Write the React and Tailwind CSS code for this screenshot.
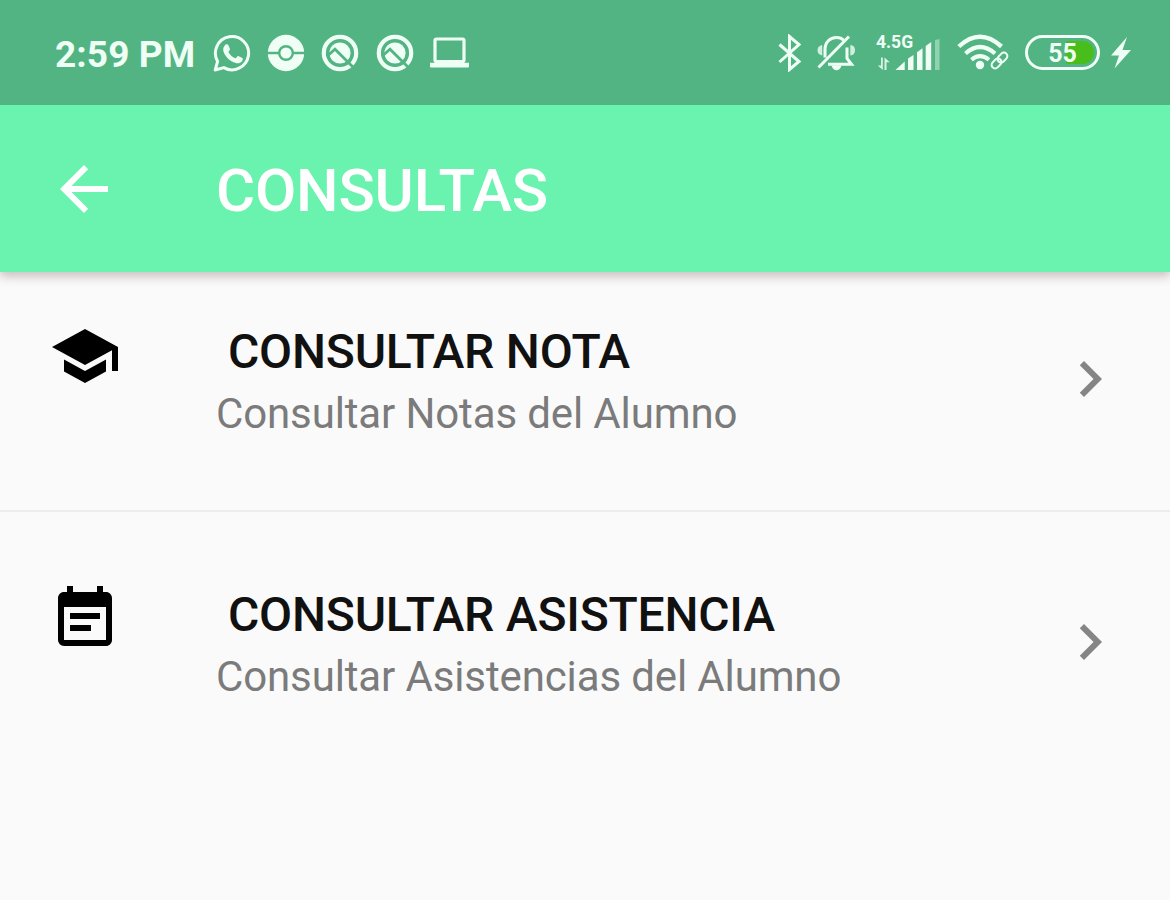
import React from 'react'
import { MdArrowBack, MdChevronRight, MdEventNote, MdSchool } from 'react-icons/md'

const items = [
    {
        id: 'nota',
        icon: MdSchool,
        title: 'CONSULTAR NOTA',
        subtitle: 'Consultar Notas del Alumno',
    },
    {
        id: 'asistencia',
        icon: MdEventNote,
        title: 'CONSULTAR ASISTENCIA',
        subtitle: 'Consultar Asistencias del Alumno',
    },
]

const WhatsappIcon = () => (
    <svg width='38' height='38' viewBox='0 0 38 38' fill='none' className='shrink-0'>
        <path d='M2.2 36 L4.6 27.4 A16.6 16.6 0 1 1 10.8 33.6 Z' stroke='currentColor' strokeWidth='3' strokeLinejoin='round' />
        <path
            d='M12.6 10.6c.6-.6 2-.7 2.5.2l1.9 4.1c.3.8-1.7 2.6-1.6 3.1 1.5 3 3.8 5 7 6.3.8.2 2-2.5 2.9-2.2l4 2c1 .6.4 2.5-.4 3.4-1.5 1.6-3.8 2.1-6 1.5-6-1.6-11-6.5-12.5-11.7-.6-2.5.3-5 2.2-6.7z'
            fill='currentColor'
        />
    </svg>
)

const BallIcon = () => (
    <svg width='38' height='38' viewBox='0 0 38 38' fill='none' className='shrink-0'>
        <circle cx='19' cy='19' r='18.2' fill='currentColor' />
        <path d='M0 19h12M26 19h12' stroke='#53b483' strokeWidth='2.4' />
        <circle cx='19' cy='19' r='6.8' stroke='#53b483' strokeWidth='2.4' />
    </svg>
)

const AndroidQIcon = () => (
    <svg width='38' height='38' viewBox='0 0 38 38' fill='none' className='shrink-0'>
        <circle cx='19' cy='19' r='16.2' stroke='currentColor' strokeWidth='4.2' />
        <circle cx='19' cy='19' r='10.6' fill='currentColor' />
        <path d='M6 22.2L14 15.2L32 33' stroke='#53b483' strokeWidth='2.8' />
    </svg>
)

const LaptopIcon = () => (
    <svg width='40' height='38' viewBox='0 0 40 38' fill='none' className='shrink-0'>
        <rect x='5' y='5' width='29' height='22.5' rx='1.5' stroke='currentColor' strokeWidth='3.2' />
        <path d='M0 28.7h39v3.5q0 1.3-1.3 1.3H1.3Q0 33.5 0 32.2z' fill='currentColor' />
    </svg>
)

const BluetoothIcon = () => (
    <svg width='26' height='38' viewBox='0 0 26 38' fill='none' className='shrink-0'>
        <path d='M2.5 10.5L22 27.5L12.5 35.5V2.5L22 10.5L2.5 28' stroke='currentColor' strokeWidth='3' />
    </svg>
)

const BellOffIcon = () => (
    <svg width='40' height='38' viewBox='0 0 40 38' fill='none' className='shrink-0'>
        <path d='M8 23.5V15.5C8 8 13 3.5 19.5 3.5c3 0 5.5 1 7.2 2.7' stroke='currentColor' strokeWidth='3' />
        <path d='M30 13.5V24.5L34.5 30.2H11' stroke='currentColor' strokeWidth='3' />
        <path d='M1.5 33.5L32 2.5' stroke='currentColor' strokeWidth='3' />
        <path d='M14.5 31.5h10q-1.5 4.7-5 4.7t-5-4.7z' fill='currentColor' />
        <path d='M5.2 11v10.5Q.5 20.5.5 16.2T5.2 11zM33.3 11v10.5q4.7-.5 4.7-5.3t-4.7-5.2z' fill='currentColor' opacity='.8' />
    </svg>
)

const SignalBars = () => (
    <svg width='65' height='32' viewBox='0 -10 65 32' fill='currentColor' className='block'>
        <path d='M5 8.5V16.5H1.8L6.8 21V8.5zM8.5 21V8.5L13.8 13.2H10.5v7.8z' opacity='.85' />
        <path d='M19.5 21l9.2-8.5V21z' />
        <path d='M32 9.5l5.5-3.5V21H32z' />
        <path d='M41 3.2l5.5-4V21H41z' />
        <path d='M49.7 -3l5.5-4V21h-5.5z' />
        <path d='M59 -9l4.5-1V21H59z' opacity='.4' />
    </svg>
)

const WifiIcon = () => (
    <svg width='52' height='38' viewBox='0 0 52 38' fill='none' className='shrink-0'>
        <path d='M1.8 12.5Q23 -7 44.5 12.5' stroke='currentColor' strokeWidth='4.4' />
        <path d='M8.5 19.5Q23 6.5 38 19.5' stroke='currentColor' strokeWidth='4.2' />
        <path d='M14.5 25.8Q23 18.5 32 25.8' stroke='currentColor' strokeWidth='4' />
        <circle cx='23' cy='31' r='4.2' fill='currentColor' />
        <g transform='rotate(-45 42.5 26.5)' stroke='currentColor' strokeWidth='2'>
            <rect x='32.8' y='23' width='11' height='7' rx='3.5' />
            <rect x='41.2' y='23' width='11' height='7' rx='3.5' />
        </g>
    </svg>
)

const BoltIcon = () => (
    <svg width='22' height='32' viewBox='0 0 22 32' fill='currentColor' className='shrink-0'>
        <path d='M17 0L1 18.5h8L4.5 31.5L21 13h-8.5z' />
    </svg>
)

const StatusBar = () => (
    <div className='relative z-10 flex h-[105px] items-center justify-between bg-[#53b483] pl-[54px] pr-[38px] text-[#effff5]'>
        <div className='flex items-center'>
            <span className='w-[158.5px] whitespace-nowrap pl-px pt-[3px] text-[37px] font-bold leading-none tracking-[0.1px]'>2:59 PM</span>
            <div className='flex items-center gap-[16.4px]'>
                <WhatsappIcon />
                <BallIcon />
                <AndroidQIcon />
                <AndroidQIcon />
                <LaptopIcon />
            </div>
        </div>
        <div className='flex items-center'>
            <BluetoothIcon />
            <div className='ml-[14px]'>
                <BellOffIcon />
            </div>
            <div className='ml-[19px] flex h-[36px] w-[65px] flex-col'>
                <span className='h-[4px] text-[17.5px] font-bold leading-[14px]'>4.5G</span>
                <SignalBars />
            </div>
            <div className='ml-[16px]'>
                <WifiIcon />
            </div>
            <div className='ml-[16px] flex h-[35px] w-[75px] items-center justify-center rounded-full border-[3.5px] border-[#effff5] p-[3px]'>
                <div className='flex h-full w-full items-center justify-center rounded-full bg-linear-to-r from-transparent from-55% to-[#48bd1c] to-55% pt-0.5 text-[25px] font-bold leading-none'>
                    55
                </div>
            </div>
            <div className='ml-[10px]'>
                <BoltIcon />
            </div>
        </div>
    </div>
)

const AppBar = () => (
    <header className='relative flex h-[167px] items-center bg-[#6af2af] pl-12 text-white shadow-[0_4px_10px_rgba(60,30,20,0.28)]'>
        <button aria-label='Volver'>
            <MdArrowBack className='size-[72px]' />
        </button>
        <h1 className='ml-24 pt-1 text-[60px] font-medium leading-none tracking-[-0.2px]'>CONSULTAS</h1>
    </header>
)

const MenuItem = ({ item }) => {
    const Icon = item.icon
    return (
        <li className='flex h-[124px] px-12'>
            <Icon className='ml-px size-[72px] shrink-0 text-black' />
            <div className='ml-[95px] flex-1 whitespace-nowrap pt-px'>
                <p className='pl-3 text-[48px] font-medium leading-[62px] tracking-[-0.22px] text-[#111111]'>{item.title}</p>
                <p className='text-[42px] leading-[62px] tracking-[-0.13px] text-[#7b7b7b]'>{item.subtitle}</p>
            </div>
            <MdChevronRight className='-mr-1 mt-[23px] size-[72px] shrink-0 text-[#858585]' />
        </li>
    )
}

const App = () => {
    return (
        <div className="flex h-[900px] w-full flex-col overflow-hidden bg-[#fafafa] font-['Roboto',sans-serif]">
            <StatusBar />
            <AppBar />
            <ul className='flex flex-col pt-[48px]'>
                <MenuItem item={items[0]} />
                <li className='mb-[71px] mt-[66px] h-[2px] bg-[#ececec]' />
                <MenuItem item={items[1]} />
            </ul>
        </div>
    )
}

export default App
